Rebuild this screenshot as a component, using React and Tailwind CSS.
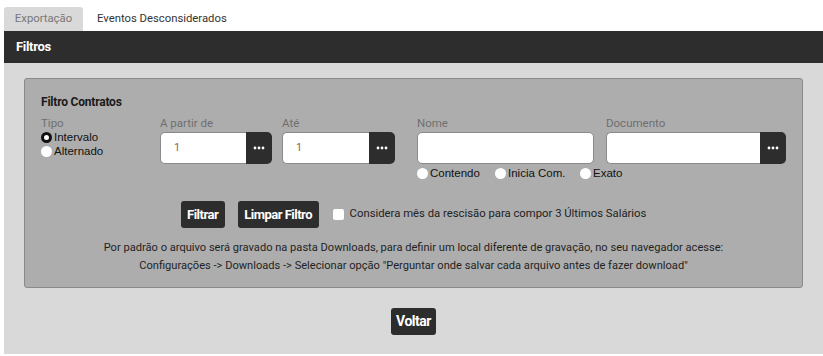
import React from 'react';

const Dots = () => (
  <svg width="12" height="4" viewBox="0 0 12 4">
    <circle cx="2" cy="2" r="1.4" fill="#fff" />
    <circle cx="6" cy="2" r="1.4" fill="#fff" />
    <circle cx="10" cy="2" r="1.4" fill="#fff" />
  </svg>
);

const Radio = ({ checked, label, className = '' }) => (
  <label className={`flex items-center gap-[2px] text-[11.5px] leading-[14px] text-[#111] whitespace-nowrap ${className}`}>
    <span
      className={
        checked
          ? 'inline-block w-[11px] h-[11px] rounded-full bg-white border-[3px] border-[#111] shrink-0'
          : 'inline-block w-[11px] h-[11px] rounded-full bg-white shrink-0'
      }
    />
    <span>{label}</span>
  </label>
);

const LookupInput = ({ label, value, width, withButton = true }) => (
  <div className="flex flex-col shrink-0" style={{ width }}>
    <span className="text-[11.5px] leading-[14px] text-[#6f6f6f] mb-[2px]">{label}</span>
    <div className="flex h-[32px]">
      <div
        className={
          withButton
            ? 'flex-1 bg-white border border-[#8a8a8a] border-r-0 rounded-l-[5px] flex items-center pl-[13px] text-[11px] text-[#9a6445]'
            : 'flex-1 bg-white border border-[#8a8a8a] rounded-[5px] flex items-center pl-[13px] text-[11px] text-[#9a6445]'
        }
      >
        {value}
      </div>
      {withButton && (
        <div className="w-[26px] bg-[#2d2d2d] rounded-r-[5px] flex items-center justify-center">
          <Dots />
        </div>
      )}
    </div>
  </div>
);

const DarkButton = ({ children, className = '' }) => (
  <button
    className={`h-[27px] bg-[#2d2d2d] text-white rounded-[3px] text-[13px] font-bold tracking-[-0.5px] shrink-0 ${className}`}
    style={{ fontFamily: '"Liberation Sans Narrow", "Roboto", sans-serif' }}
  >
    {children}
  </button>
);

export default function App() {
  return (
    <div className="w-[823px] h-[356px] bg-white overflow-hidden" style={{ fontFamily: 'Roboto, "Liberation Sans", sans-serif' }}>
      <div className="pl-[4px] pt-[7px]">
        {/* tabs */}
        <div className="flex h-[24px] items-stretch text-[11.3px]">
          <div className="w-[79px] bg-[#d9d9d9] rounded-t-[3px] flex items-center justify-center text-[#777]">Exportação</div>
          <div className="pl-[14px] flex items-center text-[#333]">Eventos Desconsiderados</div>
        </div>

        {/* header */}
        <div className="h-[32px] bg-[#2d2d2d] text-white font-bold text-[13px] flex items-center pl-[12px] tracking-[-0.3px]">
          Filtros
        </div>

        {/* body */}
        <div className="bg-[#d9d9d9] px-[20px] pt-[15px] pb-[19px] h-[291px]">
          <div className="border border-[#8a8a8a] rounded-[3px] bg-[#adadad] h-[210px] pl-[16px] pr-[16px] pt-[15px]">
            <div className="text-[12px] leading-[16px] font-bold text-[#1a1a1a] tracking-[-0.2px]">Filtro Contratos</div>

            <div className="flex mt-[6px] items-start">
              <div className="w-[119px] shrink-0 flex flex-col">
                <span className="text-[11.5px] leading-[14px] text-[#6f6f6f]">Tipo</span>
                <div className="flex flex-col" style={{ fontFamily: '"Liberation Sans", Arial, sans-serif' }}>
                  <Radio checked label="Intervalo" />
                  <Radio label="Alternado" />
                </div>
              </div>
              <LookupInput label="A partir de" value="1" width={112} />
              <div className="w-[10px] shrink-0" />
              <LookupInput label="Até" value="1" width={113} />
              <div className="w-[22px] shrink-0" />
              <div className="flex flex-col w-[177px] shrink-0">
                <LookupInput label="Nome" value="" width={177} withButton={false} />
                <div className="flex mt-[2px]" style={{ fontFamily: '"Liberation Sans", Arial, sans-serif' }}>
                  <Radio label="Contendo" className="w-[78px] shrink-0" />
                  <Radio label="Inicia Com." className="w-[85px] shrink-0" />
                  <Radio label="Exato" className="shrink-0" />
                </div>
              </div>
              <div className="w-[12px] shrink-0" />
              <LookupInput label="Documento" value="" width={180} />
            </div>

            <div className="flex items-center justify-center mt-[21px] -ml-[16px] -mr-[16px]">
              <DarkButton className="w-[44px]">Filtrar</DarkButton>
              <DarkButton className="w-[81px] ml-[13px]">Limpar Filtro</DarkButton>
              <span className="ml-[14px] w-[11px] h-[11px] bg-white rounded-[2px] inline-block" />
              <span className="ml-[6px] text-[11.3px] text-[#222]">Considera mês da rescisão para compor 3 Últimos Salários</span>
            </div>

            <div className="mt-[11px] -ml-[16px] -mr-[16px] text-center text-[11.1px] leading-[18px] text-[#1f1f1f]">
              <div>Por padrão o arquivo será gravado na pasta Downloads, para definir um local diferente de gravação, no seu navegador acesse:</div>
              <div>Configurações -&gt; Downloads -&gt; Selecionar opção "Perguntar onde salvar cada arquivo antes de fazer download"</div>
            </div>
          </div>

          <div className="flex justify-center mt-[20px]">
            <DarkButton className="w-[45px] h-[26px] text-[14px]">Voltar</DarkButton>
          </div>
        </div>
      </div>
    </div>
  );
}
